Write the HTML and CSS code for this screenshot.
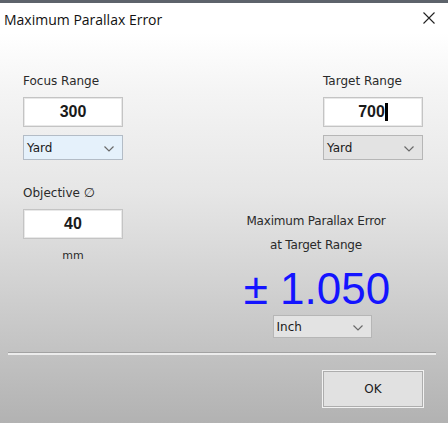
FILE: index.html
```html
<!DOCTYPE html>
<html>
<head>
<meta charset="utf-8">
<link rel="stylesheet" href="styles.css">
</head>
<body>
<div class="window">
  <div class="topstrip"></div>
  <div class="titlebar">
    <span class="title">Maximum Parallax Error</span>
    <svg class="close" width="12" height="12" viewBox="0 0 12 12"><path d="M0.5 0.5 L11.5 11.5 M11.5 0.5 L0.5 11.5" stroke="#222" stroke-width="1.1" fill="none"/></svg>
  </div>
  <div class="content">
    <div class="top">
      <div class="col">
        <div class="label">Focus Range</div>
        <div class="input">300</div>
        <div class="select select-focus"><span>Yard</span><svg class="chev" width="10" height="6" viewBox="0 0 10 6"><path d="M0.5 0.5 L5 5 L9.5 0.5" stroke="#6a6a6a" stroke-width="1.2" fill="none"/></svg></div>
      </div>
      <div class="col">
        <div class="label">Target Range</div>
        <div class="input">700<span class="caret"></span></div>
        <div class="select"><span>Yard</span><svg class="chev" width="10" height="6" viewBox="0 0 10 6"><path d="M0.5 0.5 L5 5 L9.5 0.5" stroke="#6a6a6a" stroke-width="1.2" fill="none"/></svg></div>
      </div>
    </div>
    <div class="lower">
      <div class="col">
        <div class="label">Objective <span class="diam">∅</span></div>
        <div class="input">40</div>
        <div class="unit">mm</div>
      </div>
      <div class="result">
        <div class="rlabel">Maximum Parallax Error</div>
        <div class="rlabel">at Target Range</div>
        <div class="value">± 1.050</div>
        <div class="select select-inch"><span>Inch</span><svg class="chev" width="10" height="6" viewBox="0 0 10 6"><path d="M0.5 0.5 L5 5 L9.5 0.5" stroke="#6a6a6a" stroke-width="1.2" fill="none"/></svg></div>
      </div>
    </div>
    <div class="sep"></div>
    <div class="footer">
      <div class="btn">OK</div>
    </div>
  </div>
</div>
</body>
</html>
```
FILE: styles.css
```css
html, body {
  margin: 0;
  padding: 0;
}
body {
  width: 448px;
  height: 423px;
  overflow: hidden;
  font-family: "DejaVu Sans", sans-serif;
  color: #2a2a2a;
}
.window {
  width: 448px;
  height: 423px;
  display: flex;
  flex-direction: column;
}
.topstrip {
  height: 3px;
  background: #5d636b;
}
.titlebar {
  height: 30px;
  background: #ffffff;
  display: flex;
  align-items: center;
  justify-content: space-between;
  padding: 0 13px 0 4px;
}
.title {
  font-family: "Open Sans", sans-serif;
  font-size: 14px;
  color: #111;
  position: relative;
  top: 1px;
}
.close {
  display: block;
}
.content {
  flex: 1;
  background: linear-gradient(to bottom, #ffffff 0px, #f4f4f4 60px, #e6e6e6 160px, #d2d2d2 250px, #b2b2b2 390px);
  padding: 41px 25px 0 23px;
  display: flex;
  flex-direction: column;
}
.top {
  display: flex;
  justify-content: space-between;
}
.col {
  width: 100px;
  display: flex;
  flex-direction: column;
}
.label {
  font-size: 12px;
  line-height: 14px;
  height: 14px;
  margin-bottom: 9px;
  white-space: nowrap;
}
.diam {
  font-size: 13px;
}
.input {
  height: 30px;
  box-sizing: border-box;
  background: #ffffff;
  border: 1px solid #c4c4c4;
  box-shadow: inset 0 0 0 1px #e8e8e8;
  display: flex;
  align-items: center;
  justify-content: center;
  font-family: "Liberation Sans", Arial, sans-serif;
  font-weight: bold;
  font-size: 16px;
  color: #1a1a1a;
}
.caret {
  display: inline-block;
  width: 3px;
  height: 18px;
  background: #000;
}
.select {
  margin-top: 8px;
  height: 25px;
  box-sizing: border-box;
  border: 1px solid #b6b6b6;
  background: #e3e3e3;
  display: flex;
  align-items: center;
  justify-content: space-between;
  padding: 0 8px 0 3px;
  font-size: 12px;
  color: #1a1a1a;
}
.select-focus {
  background: #e5f1fb;
  border-color: #b3bcc6;
}
.chev {
  display: block;
  margin-top: 2px;
}
.lower {
  margin-top: 26px;
  display: flex;
  align-items: flex-start;
}
.unit {
  margin-top: 10px;
  font-size: 11px;
  line-height: 14px;
  text-align: center;
}
.result {
  margin-left: 103px;
  margin-top: 23px;
  width: 180px;
  display: flex;
  flex-direction: column;
  align-items: center;
}
.rlabel {
  font-size: 12px;
  line-height: 24px;
  white-space: nowrap;
  letter-spacing: -0.2px;
}
.value {
  font-family: "Liberation Sans", Arial, sans-serif;
  font-size: 44px;
  line-height: 44px;
  color: #1414ff;
  white-space: nowrap;
  margin-left: 2px;
  margin-top: 10px;
}
.select-inch {
  margin-top: 4px;
  width: 99px;
  height: 23px;
  margin-left: 12px;
}
.sep {
  margin: 14px -13px 0 -15px;
  height: 0;
  border-top: 1px solid #a2a2a2;
  border-bottom: 2px solid #ececec;
}
.footer {
  display: flex;
  justify-content: flex-end;
  margin-top: 15px;
  margin-right: -1px;
}
.btn {
  width: 102px;
  height: 38px;
  box-sizing: border-box;
  border: 1px solid #f2f2f2;
  box-shadow: inset 0 0 0 1px #adadad;
  background: #e1e1e1;
  display: flex;
  align-items: center;
  justify-content: center;
  font-size: 12px;
  color: #1a1a1a;
}
```
